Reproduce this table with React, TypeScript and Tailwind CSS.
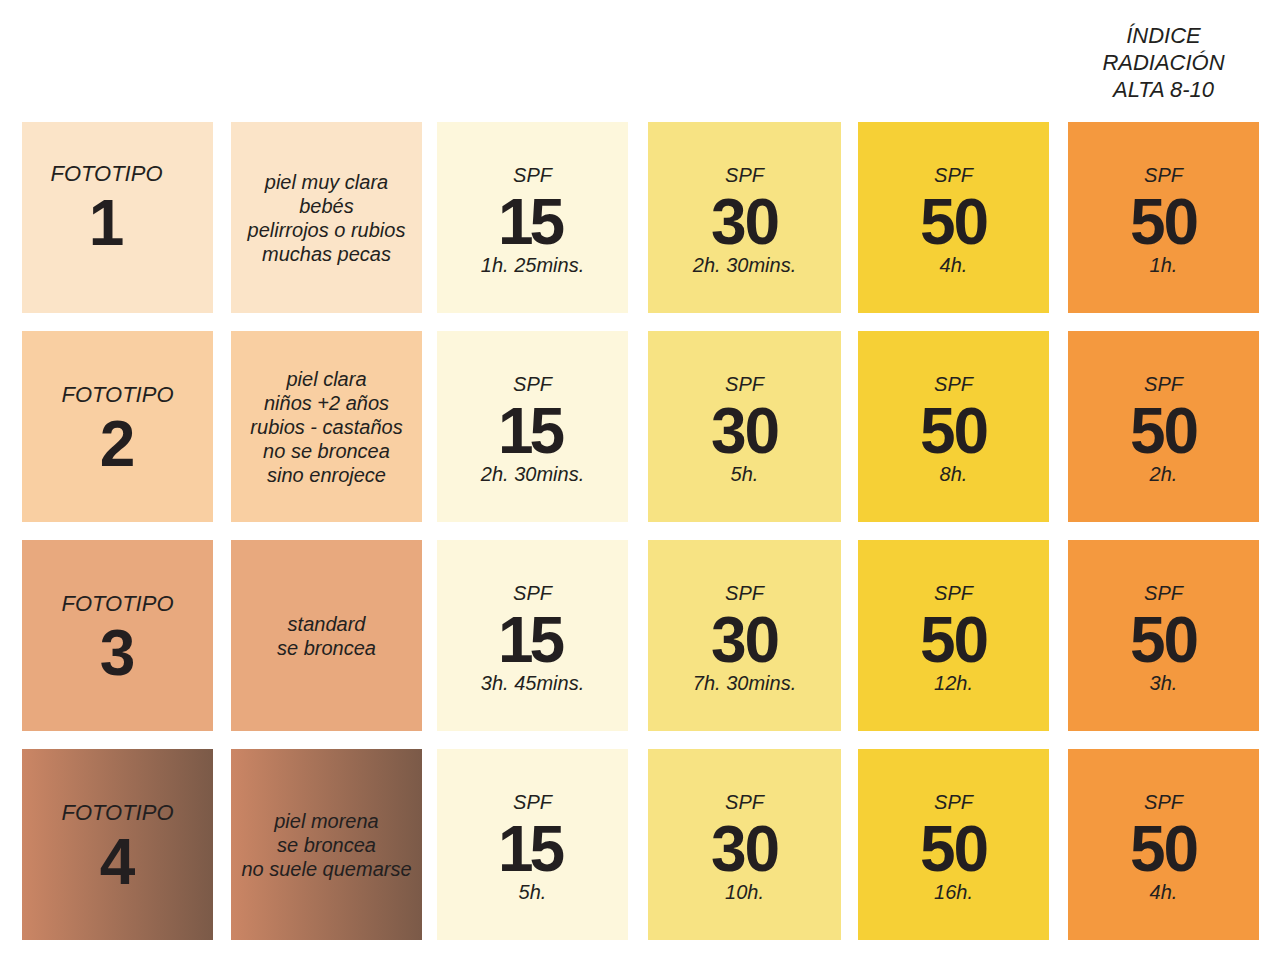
import React from "react";

type Row = {
  n: string;
  bg: string;
  desc: string[];
  times: [string, string, string, string];
  first?: boolean;
};

const rows: Row[] = [
  {
    n: "1",
    bg: "bg-[#fbe4c8]",
    desc: ["piel muy clara", "bebés", "pelirrojos o rubios", "muchas pecas"],
    times: ["1h. 25mins.", "2h. 30mins.", "4h.", "1h."],
    first: true,
  },
  {
    n: "2",
    bg: "bg-[#f9cfa2]",
    desc: ["piel clara", "niños +2 años", "rubios - castaños", "no se broncea", "sino enrojece"],
    times: ["2h. 30mins.", "5h.", "8h.", "2h."],
  },
  {
    n: "3",
    bg: "bg-[#e8a97e]",
    desc: ["standard", "se broncea"],
    times: ["3h. 45mins.", "7h. 30mins.", "12h.", "3h."],
  },
  {
    n: "4",
    bg: "bg-gradient-to-r from-[#cb8665] to-[#7b5a48]",
    desc: ["piel morena", "se broncea", "no suele quemarse"],
    times: ["5h.", "10h.", "16h.", "4h."],
  },
];

const spf = [
  { v: "15", bg: "bg-[#fdf7dc]", cell: "ml-[15px] w-[191px]", num: "tracking-[-4px] pr-[6px]" },
  { v: "30", bg: "bg-[#f7e383]", cell: "ml-[20px] w-[193px]", num: "tracking-[-2px]" },
  { v: "50", bg: "bg-[#f6d036]", cell: "ml-[17px] w-[191px]", num: "tracking-[-2px]" },
  { v: "50", bg: "bg-[#f4993f]", cell: "ml-[19px] w-[191px]", num: "tracking-[-2px]" },
];

function SpfCell({ v, bg, cell, num, time }: { v: string; bg: string; cell: string; num: string; time: string }) {
  return (
    <div className={`${bg} ${cell} h-[191px] flex flex-col items-center justify-center pt-[4px]`}>
      <div className="italic text-[20px] leading-[24px]">SPF</div>
      <div className={`font-bold text-[64px] leading-[62px] mt-[4px] ${num}`}>{v}</div>
      <div className="italic text-[20px] leading-[24px]">{time}</div>
    </div>
  );
}

export default function App() {
  return (
    <div
      className="w-[1280px] h-[966px] bg-white text-[#231f20] overflow-hidden"
      style={{ fontFamily: '"Liberation Sans", Arial, sans-serif' }}
    >
      <div className="pl-[22px] pt-[22px]">
        <div className="flex">
          <div className="ml-[1046px] w-[191px] flex flex-col items-center italic text-[22px] leading-[27px]">
            <div>ÍNDICE</div>
            <div>RADIACIÓN</div>
            <div>ALTA 8-10</div>
          </div>
        </div>
        <div className="flex flex-col gap-y-[18px] mt-[19px]">
          {rows.map((r) => (
            <div key={r.n} className="flex">
              <div
                className={`${r.bg} w-[191px] h-[191px] flex flex-col items-center justify-center ${
                  r.first ? "pb-[19px] pr-[22px]" : "pt-[5px]"
                }`}
              >
                <div className="italic text-[22px] leading-[26px]">FOTOTIPO</div>
                <div className="font-bold text-[64px] leading-[64px] mt-[4px]">{r.n}</div>
              </div>
              <div
                className={`${r.bg} ml-[18px] w-[191px] h-[191px] flex flex-col items-center justify-center italic text-[20px] leading-[24px] text-center`}
              >
                {r.desc.map((d) => (
                  <div key={d} className="whitespace-nowrap">
                    {d}
                  </div>
                ))}
              </div>
              {spf.map((s, i) => (
                <SpfCell key={i} v={s.v} bg={s.bg} cell={s.cell} num={s.num} time={r.times[i]} />
              ))}
            </div>
          ))}
        </div>
      </div>
    </div>
  );
}
